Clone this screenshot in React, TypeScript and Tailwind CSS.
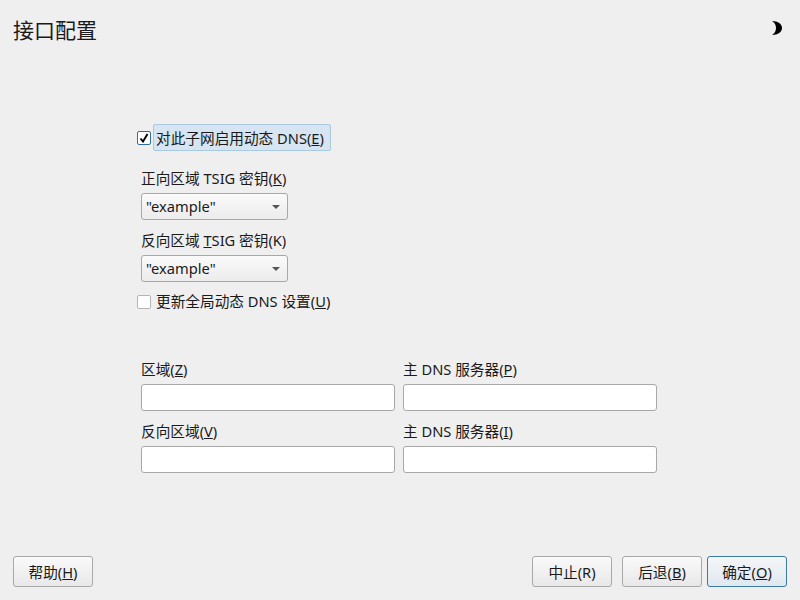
const font = "font-['Noto_Sans','Noto_Sans_CJK_SC',sans-serif]";

function Field({ label, className }: { label: React.ReactNode; className?: string }) {
  return (
    <div className={className}>
      <div className="h-[23px] leading-[23px]">{label}</div>
      <input className="mt-[3px] block h-[27px] w-[254px] rounded-[3px] border border-[#a8a8a8] bg-white" />
    </div>
  );
}

function Combo() {
  return (
    <div className="mt-[3px] flex h-[27px] w-[147px] items-center justify-between rounded-[3px] border border-[#a8a8a8] bg-gradient-to-b from-[#fafafa] to-[#ececec] pl-1 pr-[6px]">
      <span className="mb-[2px]">"example"</span>
      <span className="mr-[1px] h-0 w-0 border-x-[4px] border-t-[4px] border-x-transparent border-t-[#555]" />
    </div>
  );
}

function Btn({ children, active }: { children: React.ReactNode; active?: boolean }) {
  return (
    <button
      className={
        'h-[31px] w-[80px] rounded-[3px] border bg-gradient-to-b pt-[1px] ' +
        (active
          ? 'border-[#3b7aa8] from-[#f4f6f8] to-[#dfe8f0]'
          : 'border-[#a8a8a8] from-[#fafafa] to-[#e8e8e8]')
      }
    >
      {children}
    </button>
  );
}

export default function App() {
  return (
    <div className={`flex h-screen w-[800px] flex-col bg-[#efefef] text-[14.67px] text-[#1a1a1a] ${font}`}>
      <header className="flex h-[60px] items-start justify-between pl-[13px] pr-[18px]">
        <h1 className="mt-[15px] text-[21px] leading-[30px]">接口配置</h1>
        <svg className="mt-[21px]" width="10" height="14" viewBox="0 0 10 14">
          <path d="M0 0C6 0 10 3 10 7C10 11 6 14 0 14C3 12 4 9.5 4 7C4 4.5 3 2 0 0Z" fill="#000" />
        </svg>
      </header>

      <main className="flex-1 pl-[137px] pt-[64px]">
        <div className="flex items-center">
          <span className="flex h-[14px] w-[14px] items-center justify-center rounded-[2px] border border-[#2f6f9f] bg-white">
            <svg width="10" height="10" viewBox="0 0 10 10">
              <path d="M1.5 5.5L4 8.5L8.5 1" fill="none" stroke="#000" strokeWidth="1.9" />
            </svg>
          </span>
          <span className="ml-[2px] h-[27px] w-[178px] rounded-[2px] border border-[#a9c9e2] bg-[#d6e5f1] pl-[2px] leading-[26px]">
            对此子网启用动态 DNS(<u>E</u>)
          </span>
        </div>

        <div className="ml-[4px] mt-[16px]">
          <div className="h-[23px] leading-[23px]">正向区域 TSIG 密钥(<u>K</u>)</div>
          <Combo />
          <div className="mt-[9px] h-[23px] leading-[23px]">反向区域 <u>T</u>SIG 密钥(K)</div>
          <Combo />
        </div>

        <div className="mt-[8px] flex h-[23px] items-center">
          <span className="h-[14px] w-[14px] rounded-[2px] border border-[#b4b4b4] bg-white" />
          <span className="ml-[5px] leading-[23px]">更新全局动态 DNS 设置(<u>U</u>)</span>
        </div>

        <div className="ml-[4px] mt-[45px] grid w-[516px] grid-cols-[254px_254px] gap-x-2 gap-y-[9px]">
          <Field label={<>区域(<u>Z</u>)</>} />
          <Field label={<>主 DNS 服务器(<u>P</u>)</>} />
          <Field label={<>反向区域(<u>V</u>)</>} />
          <Field label={<>主 DNS 服务器(<u>I</u>)</>} />
        </div>
      </main>

      <footer className="flex h-[44px] items-start pl-[13px] pr-[13px]">
        <Btn>帮助(<u>H</u>)</Btn>
        <div className="ml-auto flex">
          <Btn>中止(R)</Btn>
          <div className="ml-[10px] flex gap-[5px]">
            <Btn>后退(<u>B</u>)</Btn>
            <Btn active>确定(<u>O</u>)</Btn>
          </div>
        </div>
      </footer>
    </div>
  );
}
